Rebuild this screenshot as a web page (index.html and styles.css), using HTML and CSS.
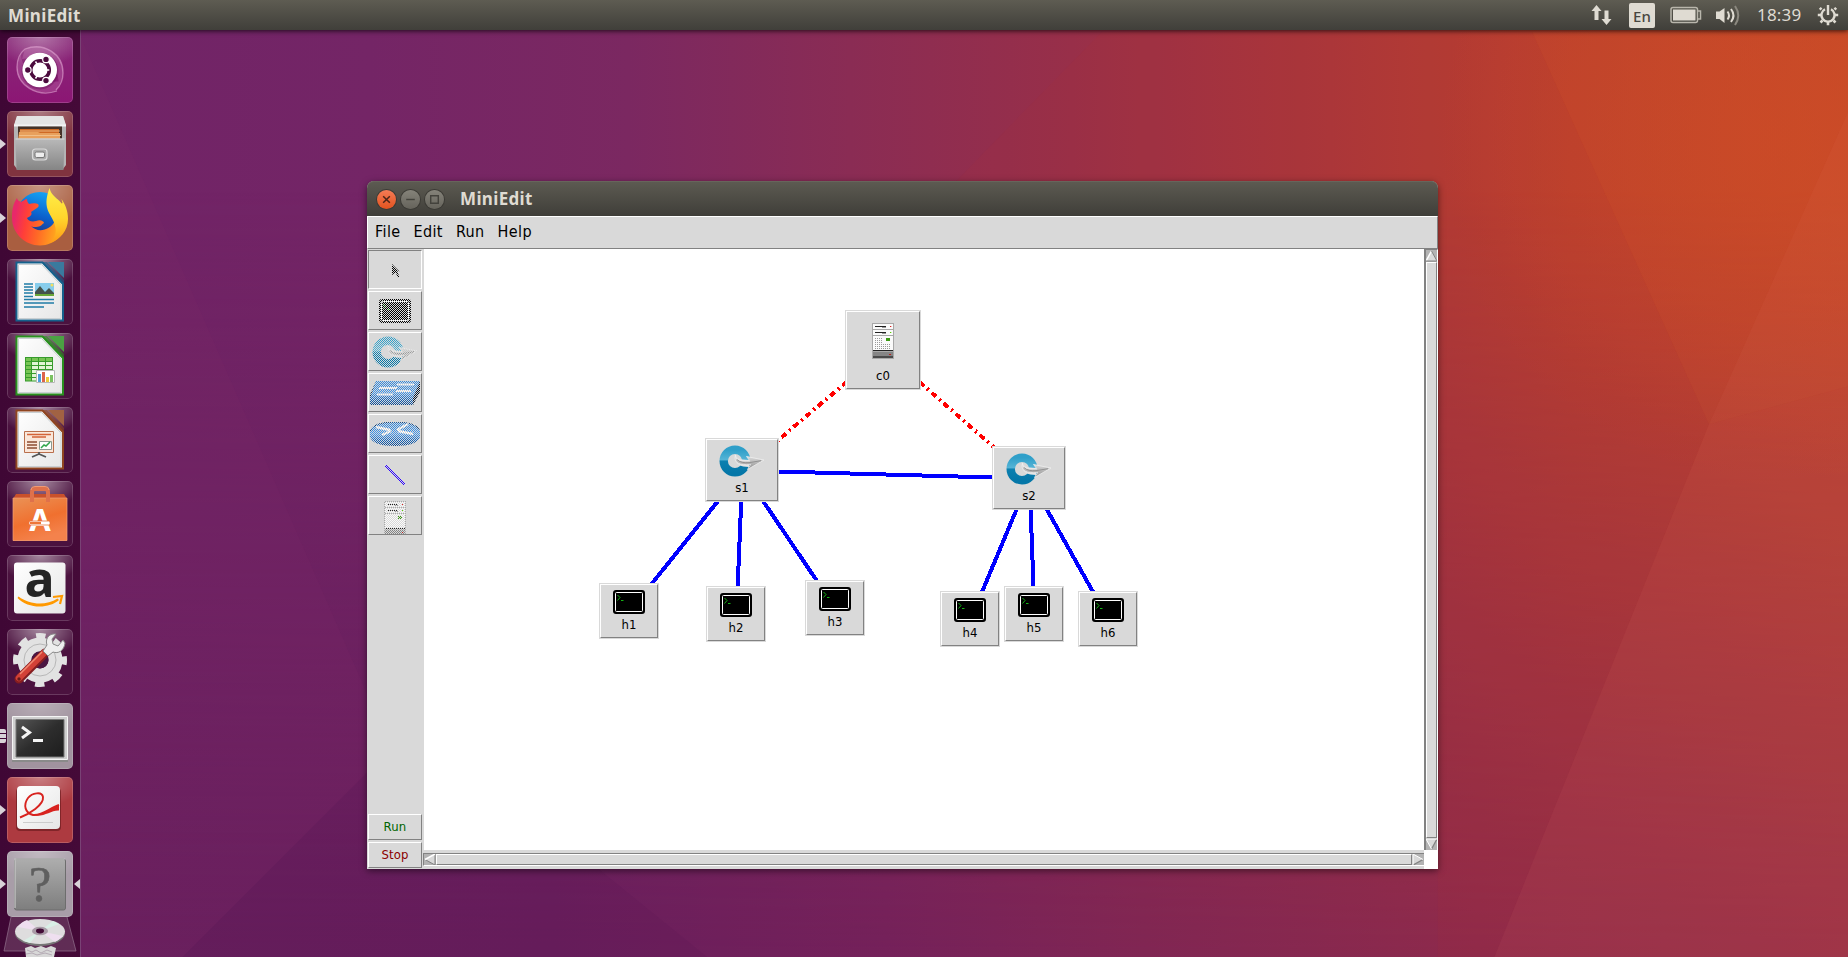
FILE: index.html
```html
<!DOCTYPE html>
<html lang="en">
<head>
<meta charset="utf-8">
<title>MiniEdit</title>
<link rel="stylesheet" href="styles.css">
</head>
<body>
<svg class="defs" width="0" height="0" aria-hidden="true">
  <defs>
    <linearGradient id="ring" x1="0" y1="0" x2="0" y2="1"><stop offset="0" stop-color="#2f9fc9"/><stop offset=".45" stop-color="#55b4d6"/><stop offset=".5" stop-color="#0c80b0"/><stop offset="1" stop-color="#0577a8"/></linearGradient>
    <linearGradient id="steel" x1="0" y1="0" x2="0" y2="1"><stop offset="0" stop-color="#e4e4e4"/><stop offset="1" stop-color="#8f8f8f"/></linearGradient>
    <linearGradient id="paper" x1="0" y1="0" x2="1" y2="1"><stop offset="0" stop-color="#fff"/><stop offset="1" stop-color="#e6e6e6"/></linearGradient>
    <linearGradient id="box" x1="0" y1="0" x2="0" y2="1"><stop offset="0" stop-color="#2f86dc"/><stop offset=".5" stop-color="#3f94ea"/><stop offset=".7" stop-color="#1c6fc8"/><stop offset="1" stop-color="#07458c"/></linearGradient>
    <symbol id="host" viewBox="0 0 32 24">
      <rect x="0" y="0" width="32" height="24" rx="3" fill="#000"/>
      <rect x="2.5" y="2.5" width="27" height="19" rx="1" fill="#000" stroke="#fff"/>
      <path d="M4.500 5l2.500 2.500L4.500 10.500M8 10.500h2.500" fill="none" stroke="#14b414"/>
    </symbol>
    <symbol id="ovs" viewBox="0 0 46 32">
      <circle cx="16" cy="16" r="11.300" fill="none" stroke="url(#ring)" stroke-width="8.400"/>
      <path d="M17 9.500c0 4 3 5 13 5.500v7c-8 0-15-3-14-10z" fill="#e4e4e4"/>
      <path d="M16.500 10c-.5 5 4 6.500 14.500 6l-3.500-4.500L45 15 28.500 24.500l3-5C21 20.500 14 18 16.500 10z" fill="url(#steel)" stroke="#efefef" stroke-width=".8"/>
      <path d="M18 14.500c3 3 7 3.500 12 3.200l12-2" fill="none" stroke="#858585" stroke-width=".8"/>
    </symbol>
    <symbol id="server" viewBox="0 0 22 36">
      <path d="M0 0h22v36H0z" fill="#a8a8a8"/>
      <path d="M1 1h20v5H1zM1 7h20v5H1zM1 13h20V27H1z" fill="#fafafa"/>
      <path d="M3 3.500h11M3 9.500h11M1 27.500h20" stroke="#222"/>
      <path d="M10 4.500h4M10 10.500h4" stroke="#999"/>
      <path d="M18 3.500h1.300" stroke="#e02020"/><path d="M18 9.500h1.300" stroke="#5ad000"/>
      <path d="M3 15.500h7M3 17.500h7M3 19.500h7M3 21.500h15M3 23.500h15M3 25.500h15" stroke="#999" stroke-dasharray="1 1"/>
      <path d="M14 15h4v3h-4z" fill="#3c9a14"/>
      <path d="M1 29h20v6H1z" fill="#858585"/><path d="M1 33h20v2H1z" fill="#4a4a4a"/><path d="M17 31.500h2" stroke="#b22"/>
    </symbol>
    <symbol id="doc" viewBox="0 0 66 66">
      <path d="M9.500 3.500H35.500L56 25V61.500H9.500z" fill="url(#paper)" stroke="currentColor" stroke-width="2"/>
      <path d="M11.500 5.500H34.500L54 26V59.500H11.500z" fill="none" stroke="#c9cfd2" stroke-width="1"/>
      <path d="M35 3h5L57 21v6z" fill="currentColor" opacity=".6"/>
      <path d="M41 3h16v16z" fill="currentColor"/><path d="M41 3h16v16z" fill="#fff" opacity=".16"/>
    </symbol>
  </defs>
</svg>

<div class="desktop">
  <svg class="wallpaper" viewBox="0 0 1568 812" preserveAspectRatio="none" aria-hidden="true">
    <defs>
      <linearGradient id="wt"><stop offset="0" stop-color="#6f2367"/><stop offset=".2" stop-color="#742566"/><stop offset=".34" stop-color="#7b2861"/><stop offset=".46" stop-color="#8a2c54"/><stop offset=".58" stop-color="#982f49"/><stop offset=".72" stop-color="#ab373a"/><stop offset=".85" stop-color="#bc412e"/><stop offset="1" stop-color="#c64a2a"/></linearGradient>
      <linearGradient id="wb"><stop offset="0" stop-color="#661f5d"/><stop offset=".3" stop-color="#681e5c"/><stop offset=".48" stop-color="#74215a"/><stop offset=".62" stop-color="#802653"/><stop offset=".8" stop-color="#8d2a4c"/><stop offset="1" stop-color="#973048"/></linearGradient>
      <linearGradient id="fade" x1="0" y1="0" x2="0" y2="1"><stop offset=".2" stop-color="#000"/><stop offset="1" stop-color="#fff"/></linearGradient>
      <mask id="low"><rect width="1568" height="812" fill="url(#fade)"/></mask>
      <radialGradient id="glow" gradientUnits="userSpaceOnUse" cx="1510" cy="120" r="290"><stop offset="0" stop-color="#cd4a26" stop-opacity=".6"/><stop offset="1" stop-color="#cd4a26" stop-opacity="0"/></radialGradient>
    </defs>
    <rect width="1568" height="812" fill="url(#wt)"/>
    <rect width="1568" height="812" fill="url(#wb)" mask="url(#low)"/>
    <path d="M1220 0H1568V420H1220z" fill="url(#glow)"/>
    <path d="M68 30L312 590V655L155 812H68z" fill="#8a3068" opacity=".1"/>
    <path d="M312 655L155 812H600L505 735z" fill="#4c1050" opacity=".1"/>
    <path d="M935 27L810 155H1220V812H1268L1450 360 1300 27z" fill="#b03030" opacity=".1"/>
    <path d="M1450 360L1268 812H1568V328z" fill="#d86050" opacity=".13"/>
    <path d="M1568 95L1450 360 1568 328z" fill="#e8764c" opacity=".1"/>
    <path d="M1300 27L1450 360 1568 95V27z" fill="#d85a20" opacity=".08"/>
  </svg>

  <header class="panel">
    <span class="app-name">MiniEdit</span>
    <div class="indicators">
      <svg class="ind-net" width="22" height="22" viewBox="0 0 22 22"><path d="M5.500 1l5 6H7.500v9h-4V7H.5zM15.500 21l-5-6h3V6.500h4V15h3z" fill="#dfdbd2"/></svg>
      <span class="lang">En</span>
      <svg class="ind-bat" width="32" height="18" viewBox="0 0 32 18"><rect x="1" y="1.500" width="26.500" height="15" rx="2" fill="none" stroke="#b9b6ac" stroke-width="1.500"/><rect x="3" y="3.500" width="22.500" height="11" fill="#dfdbd2"/><path d="M28 5h2.500v8H28" fill="none" stroke="#b9b6ac" stroke-width="1.500"/></svg>
      <svg class="ind-vol" width="26" height="22" viewBox="0 0 26 22"><path d="M1 7.500h3.500L9.500 4v15L4.500 15H1z" fill="#dfdbd2"/><path d="M12.500 7.500q3 4 0 8M16 5q5 6.500 0 13" fill="none" stroke="#dfdbd2" stroke-width="2"/><path d="M20 2q6.500 9.500 0 19" fill="none" stroke="#8b887f" stroke-width="2"/></svg>
      <span class="clock">18:39</span>
      <svg class="ind-gear" width="22" height="22" viewBox="0 0 22 22"><g fill="none" stroke="#dfdbd2"><path d="M8 5.200a6.600 6.600 0 1 0 6 0" stroke-width="2.400"/><path d="M11 1v10" stroke-width="2.400"/><path d="M4.500 5.500L2.800 3.800M17.500 5.500l1.700-1.700M4 11H.8M18 11h3.200M5.500 16.500l-2 2M16.500 16.500l2 2M11 18v3.200" stroke-width="2.600"/></g></svg>
    </div>
  </header>

  <nav class="launcher">
    <div class="tile t-dash"><svg viewBox="0 0 66 66"><path d="M18 12C36 5 56 16 56 36c0 7-3 13-7 17M50 54C30 61 10 48 10 30c0-8 3-14 8-18" fill="none" stroke="#e3a8d4" stroke-width="1.300" opacity=".6"/><path d="M18 12C36 5 56 16 56 36c0 4-2 9-4 12C52 30 38 18 15 22zM49 54C30 60 10 48 10 30c0-4 1-8 4-12 2 18 18 30 40 26z" fill="#f0b5e0" opacity=".2"/><circle cx="33" cy="34" r="18.500" fill="#5b0b4c" opacity=".35"/><circle cx="32.700" cy="33" r="17.300" fill="#fff"/><circle cx="33" cy="33" r="9.300" fill="none" stroke="#4b0a3d" stroke-width="3.500"/><path d="M42.300 33h-3M28.500 24.500l1.800 3M28.500 41.500l1.800-3" stroke="#fff" stroke-width="1.500"/><g fill="#4b0a3d" stroke="#fff" stroke-width="1.200"><circle cx="20.800" cy="33" r="3.300"/><circle cx="39" cy="22.400" r="3.300"/><circle cx="39" cy="43.600" r="3.300"/></g></svg></div>
    <div class="tile t-files running"><svg viewBox="0 0 66 66"><defs><linearGradient id="fc" x1="0" y1="0" x2="0" y2="1"><stop offset="0" stop-color="#b9b9b9"/><stop offset="1" stop-color="#858585"/></linearGradient></defs><path d="M10 5h46l3 10v39l-3 4H10l-3-4V15z" fill="#b4b4b4"/><path d="M10 5h46l3 9H7z" fill="#e4e4e4"/><path d="M7 13.500h52v2H7z" fill="#f4f4f4"/><path d="M11 15.500h44V29H11z" fill="#453228"/><path d="M13 18h39v10H12z" fill="#cf6924"/><path d="M12 21h19l2 1h20v7H11z" fill="#e8a05c"/><path d="M13 20h40M12 24.500h42" stroke="#f3c793" stroke-width=".8"/><path d="M8.500 27.500h49L56.500 59h-47z" fill="url(#fc)"/><path d="M8.500 28h49" stroke="#d7d7d7"/><rect x="25.500" y="38" width="14.500" height="11" rx="3" fill="#aaa" stroke="#dadada" stroke-width="1.200"/><rect x="28" y="41" width="9.500" height="5.500" rx="1.500" fill="#eee" stroke="#777"/></svg></div>
    <div class="tile t-firefox running"><svg viewBox="0 0 66 66"><defs><linearGradient id="ff" gradientUnits="userSpaceOnUse" x1="54" y1="38" x2="8" y2="30"><stop offset="0" stop-color="#ffb01c"/><stop offset=".45" stop-color="#ff6a26"/><stop offset=".75" stop-color="#ff3f38"/><stop offset="1" stop-color="#e8286a"/></linearGradient><linearGradient id="fb" x1=".6" y1="0" x2=".3" y2="1"><stop offset="0" stop-color="#13a4f4"/><stop offset=".5" stop-color="#0b5fcb"/><stop offset="1" stop-color="#29256b"/></linearGradient><linearGradient id="fy" x1="0" y1="0" x2="0" y2="1"><stop offset="0" stop-color="#fff04a"/><stop offset=".55" stop-color="#ffd52c"/><stop offset="1" stop-color="#ff9a16"/></linearGradient></defs><circle cx="33" cy="31" r="24" fill="url(#fb)"/><path d="M10 13c0 2 2 3 4 4 2-1 4-3 6-3 0 2 1 4 2 5 3-1 7-1 9 0 1 1 1 3-1 4l-6 4c2 3-2 5-4 6 1 3 5 4 9 3 4-2 8 0 8 2-2 1-3 4-8 4-2 0-4 0-5-1 6 7 19 5 24-5L60 32C60 48 48 60.500 33 60.500S5 48 5 33c0-8 1-14 5-20z" fill="url(#ff)"/><path d="M42.500 3c1 6 6 9 10 13 2 2 2 3 3 2l-1-4c4 6 6.500 12 6.500 20 0 12-8 20-17 24 4-6 6-11 4-17-2-12-14-15-5.500-38z" fill="url(#fy)"/></svg></div>
    <div class="tile t-writer"><svg viewBox="0 0 66 66"><use href="#doc" width="66" height="66"/><path d="M17 25h9M17 28h9M17 31h9M17 34h9M17 37.500h9M17 40.500h30M17 44h30M17 48h20" stroke="#217ca6" stroke-width="1.600"/><path d="M28 24h19v13H28z" fill="#87cdec"/><path d="M28 33l5-6 5 6 4-4 5 5v3H28z" fill="#44524c"/><path d="M28 35h19v2H28z" fill="#68a838"/><circle cx="45" cy="26" r="1.500" fill="#f3de60"/></svg></div>
    <div class="tile t-calc"><svg viewBox="0 0 66 66"><use href="#doc" width="66" height="66"/><path d="M18 24h28v24H18z" fill="#e2f5d6"/><path d="M18 24h28v4H18zM18 24h6v24h-6z" fill="#77c454"/><path d="M18 24.500h28M18 28.500h28M18 32.500h28M18 36.500h28M18 40.500h28M18 44.500h28M18 48h28M18.500 24v24M24.500 24v24M31.500 24v24M38.500 24v24M45.500 24v24" stroke="#379b2c"/><path d="M29.500 37.500h18v12h-18z" fill="#fff" stroke="#b8b8b8"/><path d="M31 41h3v8h-3z" fill="#4d9fdb"/><path d="M35 39h3v10h-3z" fill="#dc644d"/><path d="M39 44h3v5h-3z" fill="#eecb37"/><path d="M43 42h3v7h-3z" fill="#7bc162"/></svg></div>
    <div class="tile t-impress"><svg viewBox="0 0 66 66"><use href="#doc" width="66" height="66"/><path d="M17.500 24.500h29v21h-29z" fill="#fae7da" stroke="#b96f4c"/><path d="M20 27.500h24M25 30h14" stroke="#d46338" stroke-width="1.500"/><path d="M20 35h10M20 38h10M20 41h10" stroke="#8c4c32" stroke-width="1.500"/><path d="M32.500 34.500h12v8h-12z" fill="#fff" stroke="#8b9990"/><path d="M34 41l3-3 2 1 4-4" fill="none" stroke="#32a64c" stroke-width="1.500"/><path d="M32 45v2l-7 3M32 47l7 3" fill="none" stroke="#555" stroke-width="1.800"/></svg></div>
    <div class="tile t-software"><svg viewBox="0 0 66 66"><defs><linearGradient id="bag" x1="0" y1="0" x2=".4" y2="1"><stop offset="0" stop-color="#ea9256"/><stop offset=".6" stop-color="#f0702f"/><stop offset="1" stop-color="#f4824c"/></linearGradient></defs><path d="M9 13h48l3 5v42H6V18z" fill="#c9512b"/><path d="M6 17h54v42.500H6z" fill="url(#bag)" stroke="#f4a275" stroke-width=".7"/><path d="M25 21V11q0-3 3-3h10q3 0 3 3v10" fill="none" stroke="#df714b" stroke-width="4"/><path d="M24 9q0-3.500 4-3.500h10q4 0 4 3.500" fill="none" stroke="#f09a73" stroke-width="1"/><text x="33" y="50" text-anchor="middle" class="bag-a">A</text><rect x="22" y="40" width="21" height="4" rx="1.500" fill="#fff" stroke="#e8743d" stroke-width=".8"/><path d="M23 42h11" stroke="#ee7638" stroke-width="2.200"/></svg></div>
    <div class="tile t-amazon"><svg viewBox="0 0 66 66"><rect x="7" y="7.500" width="51.500" height="51" rx="3" fill="url(#paper)"/><text x="32.500" y="42" text-anchor="middle" class="amz-a">a</text><path d="M11.500 41.500c12 9 28 9 39 2l1.500 1.500C42 54 21 54 10.500 43z" fill="#ff9900"/><path d="M46 42l9-1-2 8" fill="none" stroke="#ff9900" stroke-width="2.200"/></svg></div>
    <div class="tile t-settings"><svg viewBox="0 0 66 66"><circle cx="33" cy="31" r="23.500" fill="none" stroke="#e2e2e2" stroke-width="7" stroke-dasharray="9.230 9.230" stroke-dashoffset="4.600"/><circle cx="33" cy="31" r="15.500" fill="none" stroke="#e2e2e2" stroke-width="14"/><circle cx="33" cy="31" r="16" fill="none" stroke="#b7b7b7"/><circle cx="33" cy="31" r="8.500" fill="#4b1541"/><path d="M12 50l26-26" stroke="#851d20" stroke-width="9" stroke-linecap="round"/><path d="M12 49l25-25" stroke="#d24137" stroke-width="6.500" stroke-linecap="round"/><path d="M13 45l22-22" stroke="#f18a72" stroke-width="1.400"/><circle cx="12" cy="50" r="1.700" fill="#66191b"/><path d="M36 22l5 5 5-4c5 2 11-1 12-9l-2-3-5 6-5-2-1-5 4-5c-8-1-11 6-9 11z" fill="#eee" stroke="#8a8a8a"/></svg></div>
    <div class="tile t-term multi"><svg viewBox="0 0 66 66"><defs><linearGradient id="tb" x1="0" y1="0" x2="1" y2="1"><stop offset="0" stop-color="#555"/><stop offset=".5" stop-color="#2d2d2d"/><stop offset="1" stop-color="#1d1d1d"/></linearGradient></defs><path d="M5 13h56v46H5z" fill="#8a8a8a"/><path d="M5.500 13.500h55v43h-55z" fill="#cfcfcf" stroke="#f4f4f4"/><path d="M9 16.500h48V54H9z" fill="url(#tb)" stroke="#777"/><path d="M15 24l7.500 5.500L15 35M26 37.500h10" fill="none" stroke="#f4f4f4" stroke-width="3"/></svg></div>
    <div class="tile t-evince running"><svg viewBox="0 0 66 66"><rect x="9" y="11" width="45" height="43" rx="4" fill="#6d1d20" opacity=".7"/><rect x="10" y="9" width="43" height="43" rx="4" fill="url(#paper)"/><path d="M13 40.500C22 37 37 28 36 20c-1-6-11-4-15 1-5 7-3 15 5 17 9 1 17-7 26-10" fill="none" stroke="#d8231f" stroke-width="1.900"/><path d="M24 37.500c10 2 18-6.500 28-9.500v5.500C43 33 36 42 24 37.500z" fill="#d8231f"/><path d="M16 45.500h30" stroke="#ccc"/></svg></div>
    <div class="tile t-unknown running active"><svg viewBox="0 0 66 66"><defs><linearGradient id="ub" x1="0" y1="0" x2="0" y2="1"><stop offset="0" stop-color="#adadad"/><stop offset="1" stop-color="#7e7e7e"/></linearGradient></defs><rect x="7.500" y="8" width="51" height="51" rx="2" fill="url(#ub)" stroke="#6d6d6d"/><path d="M8 57V8h50" fill="none" stroke="#c9c9c9" stroke-width="1.200"/><text x="33" y="50" text-anchor="middle" class="q-mark">?</text></svg></div>
    <svg class="folded" width="74" height="40" viewBox="0 0 74 40"><path d="M8 0h56l9 34H1z" fill="#6c3c63" opacity=".7"/><path d="M1 34L8 0M73 34L64 0M1 34h72" stroke="#8b6a87" fill="none" stroke-width=".8"/><ellipse cx="37" cy="16" rx="25" ry="13" fill="#777"/><ellipse cx="37" cy="14.500" rx="25" ry="12.500" fill="#deddde"/><path d="M37 14L15 10q3-5 9-7zM37 14l23 5q-4 4-8 6z" fill="#efdff0"/><path d="M37 14L50 4l6 3zM37 14L20 24l7 2z" fill="#d9efe6"/><ellipse cx="37" cy="14" rx="8" ry="4.300" fill="#a99ba7"/><ellipse cx="37" cy="14" rx="4" ry="2.400" fill="#420c37"/><path d="M22 31l6-2 4 2 6-2 5 2 5-2 5 2-2 9H23z" fill="#d8d8d8"/><path d="M24 33l5 2 4-2 5 3 6-3 5 2M23 37l6-1 5 2 8-2 7 2" fill="none" stroke="#b5abb5"/></svg>
  </nav>

  <main class="window">
    <div class="titlebar">
      <span class="wb wb-close"><svg viewBox="0 0 20 20"><path d="M6.500 6.500l7 7M13.500 6.500l-7 7" stroke="#4a2418" stroke-width="1.600"/></svg></span>
      <span class="wb"><svg viewBox="0 0 20 20"><path d="M5.500 10h9" stroke="#43423c" stroke-width="1.500"/></svg></span>
      <span class="wb"><svg viewBox="0 0 20 20"><path d="M6 6h8v8H6z" fill="none" stroke="#43423c" stroke-width="1.500"/></svg></span>
      <span class="title">MiniEdit</span>
    </div>
    <div class="menubar"><span>File</span><span>Edit</span><span>Run</span><span>Help</span></div>
    <div class="body">
      <aside class="tools">
        <div class="tool sunken"><svg width="8" height="14" viewBox="0 0 8 14"><path d="M0 0l7.500 7.500H5l2.500 5L6 13.500 3.500 8.500 0 11z" fill="#000"/></svg></div>
        <div class="tool"><svg width="32" height="24"><use href="#host"/></svg></div>
        <div class="tool"><svg width="46" height="32"><use href="#ovs"/></svg></div>
        <div class="tool"><svg width="50" height="24" viewBox="0 0 50 24"><path d="M6 0h44v6L43 24H0V14z" fill="url(#box)"/><path d="M50 0L43 17v7l7-13z" fill="#04152c"/><path d="M6 0L0 14v3z" fill="#123"/><path d="M9 7h18M27 3.500h17M7 13.500h16M26 10h15" stroke="#f4f8ff" stroke-width="2"/></svg></div>
        <div class="tool"><svg width="50" height="24" viewBox="0 0 50 24"><path d="M0 9Q3 0 25 0t25 9v6q-3 9-25 9T0 15z" fill="url(#box)"/><path d="M0 9Q3 0 25 0t25 9" fill="none" stroke="#0b3b70"/><path d="M6 5l14 3M12 13l9-4M27 8l11-6M28 9l15 3" stroke="#fff" stroke-width="2.400"/></svg></div>
        <div class="tool"><svg width="20" height="20" viewBox="0 0 20 20"><path d="M.5.5l19 19" stroke="#2a00ff" stroke-width="2.500"/></svg></div>
        <div class="tool tool-server"><svg width="22" height="36"><use href="#server"/></svg></div>
        <div class="run-stop">
          <div class="cmd run">Run</div>
          <div class="cmd stop">Stop</div>
        </div>
      </aside>
      <div class="canvas">
        <svg class="links" width="1000" height="601" viewBox="423.500 248.500 1000 601" shape-rendering="crispEdges">
          <g stroke="#f00" stroke-width="4" stroke-dasharray="6 4 2 4"><path d="M883 350L742 470M883 350L1029 478"/></g>
          <g stroke="#00f" stroke-width="4"><path d="M742 470L1029 478M742 470L629 611M742 470L736 614M742 470L835 608M1029 478L970 619M1029 478L1034 614M1029 478L1108 619"/></g>
        </svg>
        <div class="node ctl c0"><svg width="22" height="36"><use href="#server"/></svg>c0</div>
        <div class="node sw s1"><svg width="46" height="32"><use href="#ovs"/></svg>s1</div>
        <div class="node sw s2"><svg width="46" height="32"><use href="#ovs"/></svg>s2</div>
        <div class="node h1"><svg width="32" height="24"><use href="#host"/></svg>h1</div>
        <div class="node h2"><svg width="32" height="24"><use href="#host"/></svg>h2</div>
        <div class="node h3"><svg width="32" height="24"><use href="#host"/></svg>h3</div>
        <div class="node h4"><svg width="32" height="24"><use href="#host"/></svg>h4</div>
        <div class="node h5"><svg width="32" height="24"><use href="#host"/></svg>h5</div>
        <div class="node h6"><svg width="32" height="24"><use href="#host"/></svg>h6</div>
      </div>
      <div class="vbar">
        <svg width="11" height="12" viewBox="0 0 11 12"><path d="M5.500 1L11 11H0z" fill="#d9d9d9"/><path d="M0 11L5.500 1" stroke="#fff" stroke-width="1.500"/><path d="M5.500 1L11 11H0" fill="none" stroke="#828282"/></svg>
        <div class="slider"></div>
        <svg width="11" height="12" viewBox="0 0 11 12"><path d="M0 1h11L5.500 11z" fill="#d9d9d9"/><path d="M11 1L5.500 11" stroke="#828282" stroke-width="1.300"/><path d="M11 1H0l5.500 10" fill="none" stroke="#fff"/></svg>
      </div>
      <div class="hbar">
        <svg width="12" height="11" viewBox="0 0 12 11"><path d="M1 5.500L11 0v11z" fill="#d9d9d9"/><path d="M11 0v11L1 5.500" fill="none" stroke="#828282"/><path d="M1 5.500L11 0" stroke="#fff" stroke-width="1.500"/></svg>
        <div class="slider"></div>
        <svg width="12" height="11" viewBox="0 0 12 11"><path d="M1 0l10 5.500L1 11z" fill="#d9d9d9"/><path d="M1 11l10-5.500" stroke="#828282" stroke-width="1.300"/><path d="M1 11V0l10 5.500" fill="none" stroke="#fff"/></svg>
      </div>
      <div class="corner"></div>
    </div>
  </main>
</div>
</body>
</html>
```
FILE: styles.css
```css
* { box-sizing: border-box; }
body { margin: 0; overflow: hidden; }
svg { display: block; flex: none; }
.defs { position: absolute; }

.desktop {
  position: relative;
  width: 1848px;
  height: 957px;
  overflow: hidden;
  display: grid;
  grid-template: 30px 927px / 81px 1fr;
  background: #702467;
}
.wallpaper { position: absolute; inset: 0; width: 100%; height: 100%; }

/* top panel */
.panel {
  position: relative;
  z-index: 2;
  grid-column: 1 / 3;
  display: flex;
  justify-content: space-between;
  align-items: center;
  padding: 0 9px 0 8px;
  background: linear-gradient(#5e5c52, #403f3a);
  box-shadow: 0 1px 5px rgba(0, 0, 0, .75);
  color: #dfdbd2;
  font-family: "Noto Sans", sans-serif;
  font-size: 17px;
  line-height: 30px;
}
.app-name { padding-top: 1px; font-weight: 700; letter-spacing: .35px; }
.indicators { display: flex; align-items: center; }
.lang {
  width: 26px;
  height: 25px;
  margin: 0 15px 0 16px;
  border-radius: 2px;
  background: #dfdbd2;
  color: #474640;
  font-size: 15px;
  font-weight: 500;
  line-height: 26px;
  text-align: center;
}
.ind-vol { margin-left: 13px; }
.clock { width: 44px; margin: 0 16px 0 16px; white-space: nowrap; letter-spacing: .2px; }

/* launcher */
.launcher {
  position: relative;
  z-index: 1;
  display: flex;
  flex-direction: column;
  gap: 8px;
  padding: 7px 0 0 7px;
  overflow: hidden;
  border-right: 1px solid #794275;
  background: linear-gradient(90deg, #3f0735, #450a38);
}
.tile {
  position: relative;
  flex: none;
  width: 66px;
  height: 66px;
  border-radius: 5px;
  background: radial-gradient(ellipse 42px 28px at 50% 0, rgba(255, 255, 255, .5), transparent), #4b123f;
  box-shadow: inset 0 0 0 1px rgba(255, 255, 255, .17);
}
.tile svg { overflow: visible; }
.t-dash { background: radial-gradient(ellipse 45px 30px at 50% 0, rgba(255, 255, 255, .35), transparent), linear-gradient(#882a78, #8c1674); }
.t-files { background: radial-gradient(ellipse 45px 30px at 50% 0, rgba(255, 255, 255, .35), transparent), #80333f; }
.t-firefox { background: radial-gradient(ellipse 50px 40px at 50% 0, rgba(255, 255, 255, .35), transparent), #a95e40; }
.t-term { background: radial-gradient(ellipse 45px 30px at 50% 0, rgba(255, 255, 255, .25), transparent), #a1939f; }
.t-evince { background: radial-gradient(ellipse 45px 30px at 50% 0, rgba(255, 255, 255, .35), transparent), #ad3a40; }
.t-unknown { background: radial-gradient(ellipse 45px 30px at 50% 0, rgba(255, 255, 255, .3), transparent), #a89da8; }
.t-writer { color: #15618c; }
.t-calc { color: #29901f; }
.t-impress { color: #8f4520; }
.running::before,
.active::after {
  content: "";
  position: absolute;
  top: 28px;
  left: -7px;
  border: solid transparent;
  border-width: 5px 0 5px 6px;
  border-left-color: #d8d2d8;
}
.active::after { left: 67px; border-width: 5px 6px 5px 0; border-right-color: #d8d2d8; }
.multi::before {
  content: "";
  position: absolute;
  top: 26px;
  left: -7px;
  width: 6px;
  height: 14px;
  border-radius: 0 2px 2px 0;
  background: repeating-linear-gradient(#d8d2d8 0 4px, transparent 4px 5px);
}
.bag-a { font: 700 31px "Noto Sans", sans-serif; fill: #fff; }
.amz-a { font: 700 50px "Open Sans", sans-serif; fill: #252525; }
.q-mark { font: 50px "Liberation Serif", serif; fill: #5f5f5f; stroke: #5f5f5f; stroke-width: .6px; }
.folded { margin: -8px 0 0 -4px; }

/* application window */
.window {
  position: absolute;
  left: 367px;
  top: 181px;
  width: 1071px;
  height: 688px;
  display: flex;
  flex-direction: column;
  border-radius: 7px 7px 0 0;
  background: #d9d9d9;
  box-shadow: 0 2px 7px rgba(0, 0, 0, .5);
  font-family: "DejaVu Sans Condensed", "DejaVu Sans", sans-serif;
  font-stretch: condensed;
}
.titlebar {
  flex: 0 0 35px;
  display: flex;
  align-items: center;
  gap: 5px;
  padding: 1px 0 0 10px;
  border-radius: 7px 7px 0 0;
  background: linear-gradient(#5d5b52, #3f3e39);
  box-shadow: inset 0 1px #67655b;
}
.wb {
  width: 19px;
  height: 19px;
  border-radius: 50%;
  background: linear-gradient(#85837a, #65635b);
  box-shadow: 0 0 0 1px #3b3a35;
}
.wb-close { background: linear-gradient(#f47b55, #e2531f); }
.title {
  margin-left: 11px;
  color: #dfdbd2;
  font: 700 17px/34px "Noto Sans", sans-serif;
  letter-spacing: .35px;
}
.menubar {
  flex: 0 0 33px;
  display: flex;
  gap: 13px;
  padding-left: 7px;
  border: 1px solid;
  border-color: #fff #828282 #828282 #fff;
  font-size: 16px;
  letter-spacing: .38px;
  line-height: 30px;
}
.body {
  flex: 1;
  display: grid;
  grid-template: 601px 19px / 57px 1000px 14px;
}
.tools {
  grid-row: 1 / 3;
  display: flex;
  flex-direction: column;
  gap: 2px;
  padding: 1px 2px 1px 1px;
}
.tool, .cmd {
  flex: none;
  border: 1px solid;
  border-color: #fff #828282 #828282 #fff;
}
.tool {
  position: relative;
  height: 39px;
  display: flex;
  justify-content: center;
  align-items: center;
  overflow: hidden;
}
.tool.sunken { border-color: #828282 #fff #fff #828282; padding: 2px 0 0 1px; }
.tool-server { align-items: flex-start; padding-top: 4px; }
/* stipple over inactive tool images */
.tool::after {
  content: "";
  position: absolute;
  inset: 0;
  background: repeating-conic-gradient(#d9d9d9 0 25%, transparent 0 50%) 0 0 / 2px 2px;
}
.run-stop { margin-top: auto; display: flex; flex-direction: column; gap: 2px; }
.cmd { height: 26px; font-size: 13px; line-height: 24px; letter-spacing: .15px; text-align: center; }
.run { color: #006400; }
.stop { color: #8b0000; }

.canvas { position: relative; background: #fff; }
.links { position: absolute; inset: 0; }
.node {
  position: absolute;
  width: 58px;
  height: 54px;
  display: flex;
  flex-direction: column;
  align-items: center;
  padding-top: 5px;
  border: 1px solid;
  border-color: #fff #828282 #828282 #fff;
  outline: 1px solid #d9d9d9;
  background: #d9d9d9;
  font-size: 13px;
  line-height: 22px;
}
.ctl { width: 74px; height: 78px; padding-top: 11px; line-height: 33px; }
.sw { width: 72px; height: 62px; padding-top: 5px; line-height: 21px; }
.c0 { left: 422px; top: 62px; }
.s1 { left: 282px; top: 190px; }
.s2 { left: 569px; top: 198px; }
.h1 { left: 176px; top: 335px; }
.h2 { left: 283px; top: 338px; }
.h3 { left: 382px; top: 332px; }
.h4 { left: 517px; top: 343px; }
.h5 { left: 581px; top: 338px; }
.h6 { left: 655px; top: 343px; }

.vbar {
  display: flex;
  flex-direction: column;
  border: solid;
  border-width: 1px 1px 0 2px;
  border-color: #828282 #fff #828282 #828282;
  background: #b3b3b3;
}
.slider {
  flex: 1;
  border: 1px solid;
  border-color: #fff #828282 #828282 #fff;
  background: #d9d9d9;
}
.hbar {
  display: flex;
  height: 13px;
  margin: 3px 0 0 -1px;
  border: solid;
  border-width: 1px 0 1px 1px;
  border-color: #828282 #fff #fff #828282;
  background: #b3b3b3;
}
.corner { background: #fff; }
```
